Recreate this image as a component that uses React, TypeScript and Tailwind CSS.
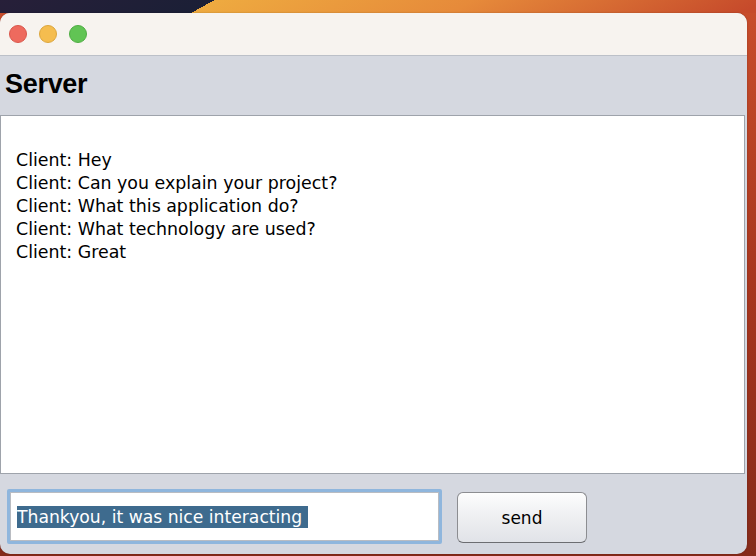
import React from "react";

export default function App() {
  const lines = [
    "Client: Hey",
    "Client: Can you explain your project?",
    "Client: What this application do?",
    "Client: What technology are used?",
    "Client: Great",
  ];
  return (
    <div className="w-[756px] h-[556px] overflow-hidden bg-[linear-gradient(180deg,#c94e2c_0%,#a8361f_50%,#852a1a_100%)]">
      <div className="h-[13px] w-full bg-[linear-gradient(151deg,#271f39_0px,#1b1f36_104px,#eeaa40_104px,#e68a3a_230px,#c64a2b_371px)]" />
      <div className="w-[747px] h-[541px] rounded-[10px] overflow-hidden flex flex-col bg-[#d5d8e0] shadow-[0_0_2px_rgba(0,0,0,0.25)]">
        <div className="h-[43px] shrink-0 bg-[#f7f3ef] border-b border-[#bcc0c8] flex items-center pl-[9px] gap-[12px]">
          <div className="w-[18px] h-[18px] rounded-full bg-[#ee6a5e] border border-[#d9574c]" />
          <div className="w-[18px] h-[18px] rounded-full bg-[#f5bd4f] border border-[#dca63d]" />
          <div className="w-[18px] h-[18px] rounded-full bg-[#61c454] border border-[#4fad43]" />
        </div>
        <div className="h-[59px] shrink-0 pt-[13px] pl-[5px]">
          <div className="font-['Liberation_Sans',Arial,sans-serif] font-bold text-[27px] leading-[30px] tracking-[-0.3px] text-black">
            Server
          </div>
        </div>
        <div className="h-[359px] shrink-0 mr-[2px] bg-white border border-[#9ea3ab] pt-[33px] pl-[15px] font-['DejaVu_Sans',sans-serif] text-[17.4px] leading-[23px] text-black">
          {lines.map((l) => (
            <div key={l}>{l}</div>
          ))}
        </div>
        <div className="flex items-start pt-[15px] pl-[7px]">
          <div className="w-[435px] h-[55px] border-[3px] border-[#8fb6dd] rounded-[2px] bg-white flex items-center">
            <div className="w-full h-full border border-[#b9bcc2] flex items-center pl-[6px]">
              <span className="inline-block h-[22px] leading-[22px] bg-[#3e6b8e] text-white font-['DejaVu_Sans',sans-serif] text-[17.2px] whitespace-pre">
                {"Thankyou, it was nice interacting "}
              </span>
            </div>
          </div>
          <button className="ml-[15px] mt-[3px] w-[130px] h-[51px] rounded-[6px] border border-[#8c8d91] border-b-[#6c6d71] bg-[linear-gradient(180deg,#fdfdfd_0%,#eff0f2_45%,#e1e3e8_100%)] font-['DejaVu_Sans',sans-serif] text-[17px] text-black flex items-center justify-center pt-[2px]">
            send
          </button>
        </div>
      </div>
    </div>
  );
}
